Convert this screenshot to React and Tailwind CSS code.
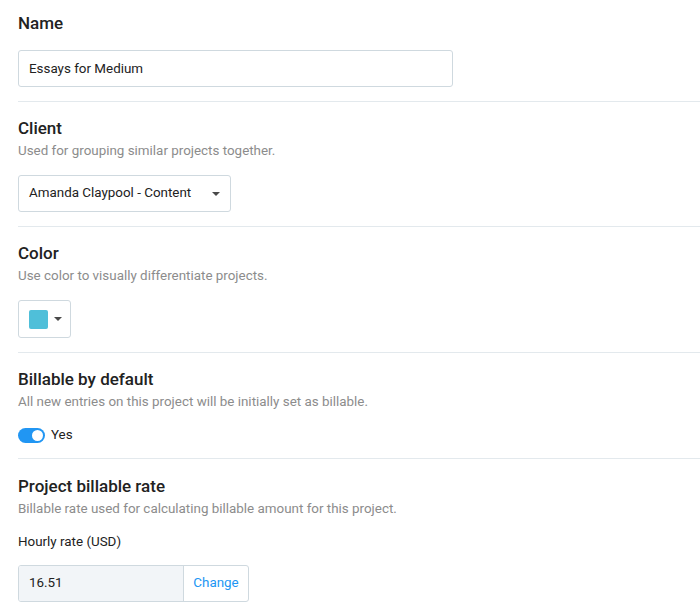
import * as React from 'react';

function Caret() {
  return (
    <svg width="8" height="4" viewBox="0 0 8 4" className="shrink-0">
      <path d="M0 0h8L4 4z" fill="#4a4a4a" />
    </svg>
  );
}

function Section({ title, subtitle, children, first = false }) {
  return (
    <section
      className={
        first
          ? 'border-b border-[#e3e9ed] pb-[14px] pt-[13px]'
          : 'border-b border-[#e3e9ed] pb-[14px] pt-[16px]'
      }
    >
      <h2 className="text-[17px] font-medium leading-5 text-[#222]">{title}</h2>
      {subtitle && <p className="mt-1 text-[13.4px] leading-[18px] text-[#8c8c8c]">{subtitle}</p>}
      <div className={subtitle ? 'mt-[15px]' : 'mt-[17px]'}>{children}</div>
    </section>
  );
}

export default function App() {
  const [billable, setBillable] = React.useState(true);

  return (
    <div className="h-[615px] w-[700px] overflow-hidden bg-white pl-[18px] font-['Roboto',sans-serif] text-[13.4px] text-[#333]">
      <Section title="Name" first>
        <input
          defaultValue="Essays for Medium"
          className="h-[37px] w-[435px] rounded-[3px] border border-[#cfd9df] px-[10px] text-[13.4px] text-[#222] outline-none"
        />
      </Section>

      <Section title="Client" subtitle="Used for grouping similar projects together.">
        <button className="flex h-[37px] w-[213px] items-center justify-between rounded-[3px] border border-[#cfd9df] pl-[10px] pr-[10px] text-[13.4px] text-[#222]">
          <span>Amanda Claypool - Content</span>
          <Caret />
        </button>
      </Section>

      <Section title="Color" subtitle="Use color to visually differentiate projects.">
        <button className="flex h-[38px] w-[53px] items-center gap-[6px] rounded-[3px] border border-[#cfd9df] pl-[10px]">
          <span className="h-[19px] w-[19px] rounded-[2px] bg-[#4fbfd9]" />
          <Caret />
        </button>
      </Section>

      <Section
        title="Billable by default"
        subtitle="All new entries on this project will be initially set as billable."
      >
        <label className="flex h-[18px] items-center gap-[6px] leading-[18px] text-[#222]">
          <button
            onClick={() => setBillable(!billable)}
            className={
              billable
                ? 'flex h-[15px] w-[27px] items-center justify-end rounded-full bg-[#2196f3] px-[2px]'
                : 'flex h-[15px] w-[27px] items-center justify-start rounded-full bg-[#c5ced4] px-[2px]'
            }
          >
            <span className="h-[11px] w-[11px] rounded-full bg-white" />
          </button>
          <span>Yes</span>
        </label>
      </Section>

      <section className="pt-[17px]">
        <h2 className="text-[17px] font-medium leading-5 text-[#222]">Project billable rate</h2>
        <p className="mt-1 text-[13.4px] leading-[18px] text-[#8c8c8c]">
          Billable rate used for calculating billable amount for this project.
        </p>
        <p className="mt-[15px] text-[13.4px] leading-[18px] text-[#222]">Hourly rate (USD)</p>
        <div className="mt-[14px] flex h-[37px] w-[231px] overflow-hidden rounded-[3px] border border-[#cfd9df]">
          <div className="flex w-[165px] items-center border-r border-[#cfd9df] bg-[#f2f5f8] pl-[10px] text-[#222]">
            16.51
          </div>
          <button className="flex-1 text-center text-[13.4px] text-[#2196f3]">Change</button>
        </div>
      </section>
    </div>
  );
}
